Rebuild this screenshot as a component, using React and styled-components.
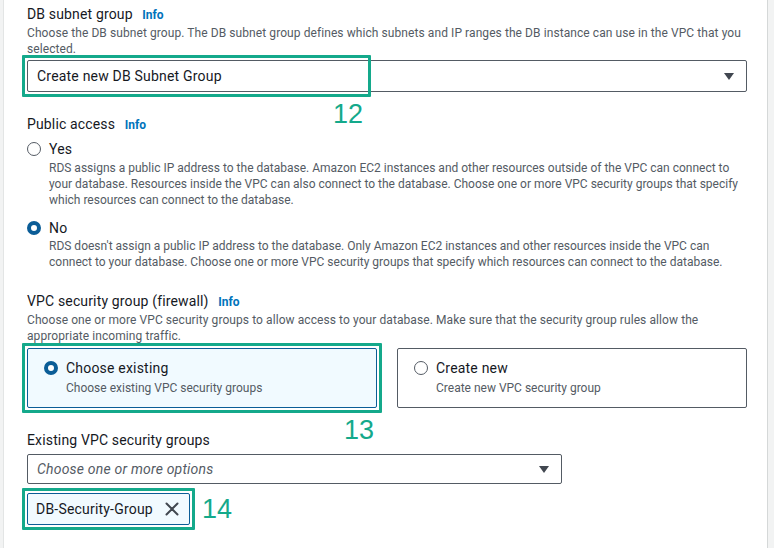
import React from "react";
import styled, { createGlobalStyle } from "styled-components";

const GlobalStyle = createGlobalStyle`
	html, body {
		margin: 0;
		padding: 0;
		background: #ffffff;
	}
	body {
		font-family: Roboto, "Liberation Sans", Arial, sans-serif;
		color: #16191f;
	}
`;

const teal = "#14a98b";

const Page = () => {
	return (
		<PageWrapper>
			<GlobalStyle />
			<SideRail />
			<Form>
				<Field>
					<Label>
						DB subnet group <Info>Info</Info>
					</Label>
					<Description>
						Choose the DB subnet group. The DB subnet group defines which subnets
						and IP ranges the DB instance can use in the VPC that you selected.
					</Description>
					<SelectWrap>
						<Select>
							<span>Create new DB Subnet Group</span>
							<Caret />
						</Select>
						<Callout width='339px'>
							<Badge placement='below'>12</Badge>
						</Callout>
					</SelectWrap>
				</Field>

				<Field gap='23px'>
					<Label>
						Public access <Info>Info</Info>
					</Label>
					<RadioOption>
						<Radio />
						<OptionText>
							<OptionTitle>Yes</OptionTitle>
							<OptionDesc gap='2px'>
								RDS assigns a public IP address to the database. Amazon EC2
								instances and other resources outside of the VPC can connect to
								your database. Resources inside the VPC can also connect to the
								database. Choose one or more VPC security groups that specify
								which resources can connect to the database.
							</OptionDesc>
						</OptionText>
					</RadioOption>
					<RadioOption spaced>
						<Radio checked />
						<OptionText>
							<OptionTitle>No</OptionTitle>
							<OptionDesc gap='1px'>
								RDS doesn't assign a public IP address to the database. Only
								Amazon EC2 instances and other resources inside the VPC can
								connect to your database. Choose one or more VPC security groups
								that specify which resources can connect to the database.
							</OptionDesc>
						</OptionText>
					</RadioOption>
				</Field>

				<Field gap='22px'>
					<Label>
						VPC security group (firewall) <Info>Info</Info>
					</Label>
					<Description>
						Choose one or more VPC security groups to allow access to your
						database. Make sure that the security group rules allow the
						appropriate incoming traffic.
					</Description>
					<Tiles>
						<TileWrap>
							<Tile selected>
								<Radio checked />
								<OptionText>
									<OptionTitle>Choose existing</OptionTitle>
									<TileDesc>Choose existing VPC security groups</TileDesc>
								</OptionText>
							</Tile>
							<Callout width='100%'>
								<Badge placement='below'>13</Badge>
							</Callout>
						</TileWrap>
						<Tile>
							<Radio />
							<OptionText>
								<OptionTitle>Create new</OptionTitle>
								<TileDesc>Create new VPC security group</TileDesc>
							</OptionText>
						</Tile>
					</Tiles>
				</Field>

				<Field gap='23px'>
					<Label>Existing VPC security groups</Label>
					<MultiSelect>
						<Placeholder>Choose one or more options</Placeholder>
						<Caret />
					</MultiSelect>
					<TokenWrap>
						<Token>
							DB-Security-Group
							<svg width='14' height='14' viewBox='0 0 14 14'>
								<path
									d='M1.5 1.5 L12.5 12.5 M12.5 1.5 L1.5 12.5'
									stroke='#414750'
									strokeWidth='2'
									strokeLinecap='round'
								/>
							</svg>
						</Token>
						<Callout width='100%'>
							<Badge placement='right'>14</Badge>
						</Callout>
					</TokenWrap>
				</Field>
			</Form>
			<SideRail right />
		</PageWrapper>
	);
};

export default Page;

const PageWrapper = styled.div`
	display: flex;
	width: 774px;
	height: 548px;
	overflow: hidden;
`;

const SideRail = styled.div`
	flex: none;
	width: ${(p) => (p.right ? "6px" : "3px")};
	background: #f2f3f3;
	${(p) =>
		p.right ? "border-left: 1px solid #d5d8d8;" : "border-right: 1px solid #e3e5e5;"}
`;

const Form = styled.div`
	flex: 1;
	padding: 5px 20px 0 23px;
	display: flex;
	flex-direction: column;
`;

const Field = styled.div`
	display: flex;
	flex-direction: column;
	margin-top: ${(p) => p.gap || "0"};
`;

const Label = styled.div`
	font-size: 14px;
	line-height: 18px;
	letter-spacing: 0.15px;
	color: #16191f;
`;

const Info = styled.span`
	margin-left: 6px;
	font-size: 12px;
	font-weight: 700;
	letter-spacing: 0;
	color: #0073bb;
`;

const Description = styled.div`
	font-size: 12px;
	line-height: 16px;
	letter-spacing: 0.08px;
	color: #545b64;
	margin-top: 1px;
`;

const SelectWrap = styled.div`
	position: relative;
	margin-top: 3px;
`;

const Select = styled.div`
	height: 32px;
	box-sizing: border-box;
	border: 1px solid #545b64;
	border-radius: 2px;
	display: flex;
	align-items: center;
	justify-content: space-between;
	padding: 0 10px 0 9px;
	font-size: 14px;
	letter-spacing: 0.2px;
	color: #16191f;
`;

const MultiSelect = styled(Select)`
	width: 535px;
	height: 30px;
	margin-top: 5px;
`;

const Placeholder = styled.span`
	font-style: italic;
	color: #545b64;
`;

const Caret = styled.span`
	width: 0;
	height: 0;
	border-left: 5px solid transparent;
	border-right: 5px solid transparent;
	border-top: 7px solid #414750;
	margin-right: 2px;
`;

const Callout = styled.span`
	position: absolute;
	left: -5px;
	top: -5px;
	width: ${(p) => p.width};
	height: 100%;
	padding: 2px;
	border: 3px solid ${teal};
	border-radius: 1px;
	pointer-events: none;
`;

const Badge = styled.span`
	position: absolute;
	font-family: "Liberation Sans", Arial, sans-serif;
	font-size: 27px;
	line-height: 27px;
	color: ${teal};
	${(p) =>
		p.placement === "below"
			? "right: 5px; top: calc(100% + 7px);"
			: "left: calc(100% + 10px); top: 50%; transform: translateY(-50%);"}
`;

const RadioOption = styled.div`
	display: flex;
	gap: 8px;
	margin-top: ${(p) => (p.spaced ? "11px" : "6px")};
`;

const Radio = styled.span`
	flex: none;
	width: 14px;
	height: 14px;
	box-sizing: border-box;
	border-radius: 50%;
	margin-top: 2px;
	background: #ffffff;
	border: ${(p) => (p.checked ? "4px solid #0b5d97" : "1.5px solid #545b64")};
`;

const OptionText = styled.div`
	display: flex;
	flex-direction: column;
`;

const OptionTitle = styled.div`
	font-size: 14px;
	line-height: 18px;
	letter-spacing: 0.2px;
	color: #16191f;
`;

const OptionDesc = styled.div`
	font-size: 12px;
	line-height: 16px;
	color: #545b64;
	margin-top: ${(p) => p.gap || "0"};
`;

const Tiles = styled.div`
	display: grid;
	grid-template-columns: 1fr 1fr;
	gap: 20px;
	margin-top: 4px;
`;

const TileWrap = styled.div`
	position: relative;
	display: flex;
`;

const Tile = styled.div`
	flex: 1;
	height: 60px;
	box-sizing: border-box;
	display: flex;
	gap: 8px;
	padding: 10px 16px 0 16px;
	border: 1px solid ${(p) => (p.selected ? "#0b5d97" : "#545b64")};
	border-radius: 2px;
	background: ${(p) => (p.selected ? "#f1faff" : "#ffffff")};
`;

const TileDesc = styled.div`
	font-size: 12px;
	line-height: 16px;
	color: #545b64;
	margin-top: 3px;
`;

const TokenWrap = styled.div`
	position: relative;
	align-self: flex-start;
	margin-top: 9px;
`;

const Token = styled.div`
	display: flex;
	align-items: center;
	gap: 12px;
	height: 32px;
	box-sizing: border-box;
	padding: 0 10px 0 8px;
	border: 1px solid #0b5d97;
	border-radius: 2px;
	background: #f1faff;
	font-size: 14px;
	letter-spacing: 0.2px;
	color: #16191f;
`;
